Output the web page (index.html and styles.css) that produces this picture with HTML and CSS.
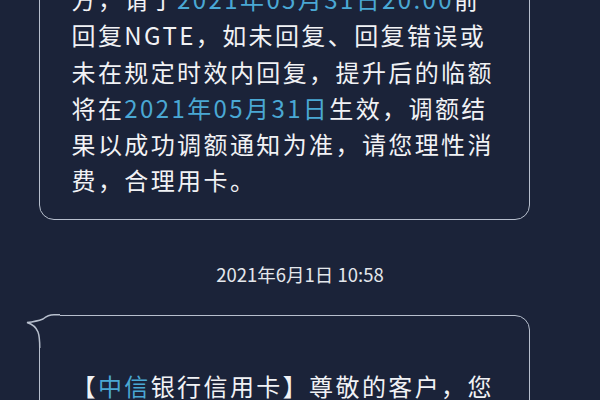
FILE: index.html
```html
<!DOCTYPE html>
<html lang="zh-CN">
<head>
<meta charset="utf-8">
<link rel="stylesheet" href="styles.css">
</head>
<body>
<div class="thread">
  <div class="bubble first">
    <div class="line">方，请于<span class="hl">2021年05月31日20:00</span>前</div>
    <div class="line">回复NGTE，如未回复、回复错误或</div>
    <div class="line">未在规定时效内回复，提升后的临额</div>
    <div class="line">将在<span class="hl">2021年05月31日</span>生效，调额结</div>
    <div class="line">果以成功调额通知为准，请您理性消</div>
    <div class="line">费，合理用卡。</div>
  </div>
  <div class="time">2021年6月1日 10:58</div>
  <div class="bubble second">
    <svg class="tail" width="40" height="40" viewBox="0 0 40 40">
      <rect x="0" y="0" width="40" height="40" fill="#1b2339"/>
      <path d="M40 6.75 L34 6.75 C29 6.75 26 8.5 23 11 C18 13 12 14 7 14.5 C12 16 16 19 18 24 C19.5 28 19.75 32 19.75 40" fill="none" stroke="#b7bfcd" stroke-width="1.5"/>
    </svg>
    <div class="line blank">&nbsp;</div>
    <div class="line">【<span class="hl">中信</span>银行信用卡】尊敬的客户，您</div>
  </div>
</div>
</body>
</html>
```
FILE: styles.css
```css
html, body {
  margin: 0;
  padding: 0;
  background: #1b2339;
  overflow: hidden;
}
body {
  width: 600px;
  height: 400px;
  font-family: "Noto Sans CJK SC", "Noto Sans", sans-serif;
}
.thread {
  display: flex;
  flex-direction: column;
  align-items: flex-start;
  margin-top: -34px;
}
.bubble {
  box-sizing: border-box;
  width: 491px;
  margin-left: 39px;
  padding: 14px 31px 20px 31.5px;
  border: 1.5px solid #b7bfcd;
  border-radius: 15px;
  background: #1b2339;
  color: #f1f2f5;
  font-size: 24px;
  line-height: 36.3px;
  letter-spacing: 2.4px;
}
.line {
  white-space: nowrap;
}
.hl {
  color: #4aa8d4;
}
.time {
  align-self: stretch;
  text-align: center;
  margin-top: 42px;
  margin-bottom: 29px;
  font-size: 18.5px;
  line-height: 24px;
  color: #e4e7ec;
}
.second {
  position: relative;
  border-top-left-radius: 0;
  padding-top: 16px;
}
.tail {
  position: absolute;
  left: -20.5px;
  top: -7.5px;
  display: block;
}
```
